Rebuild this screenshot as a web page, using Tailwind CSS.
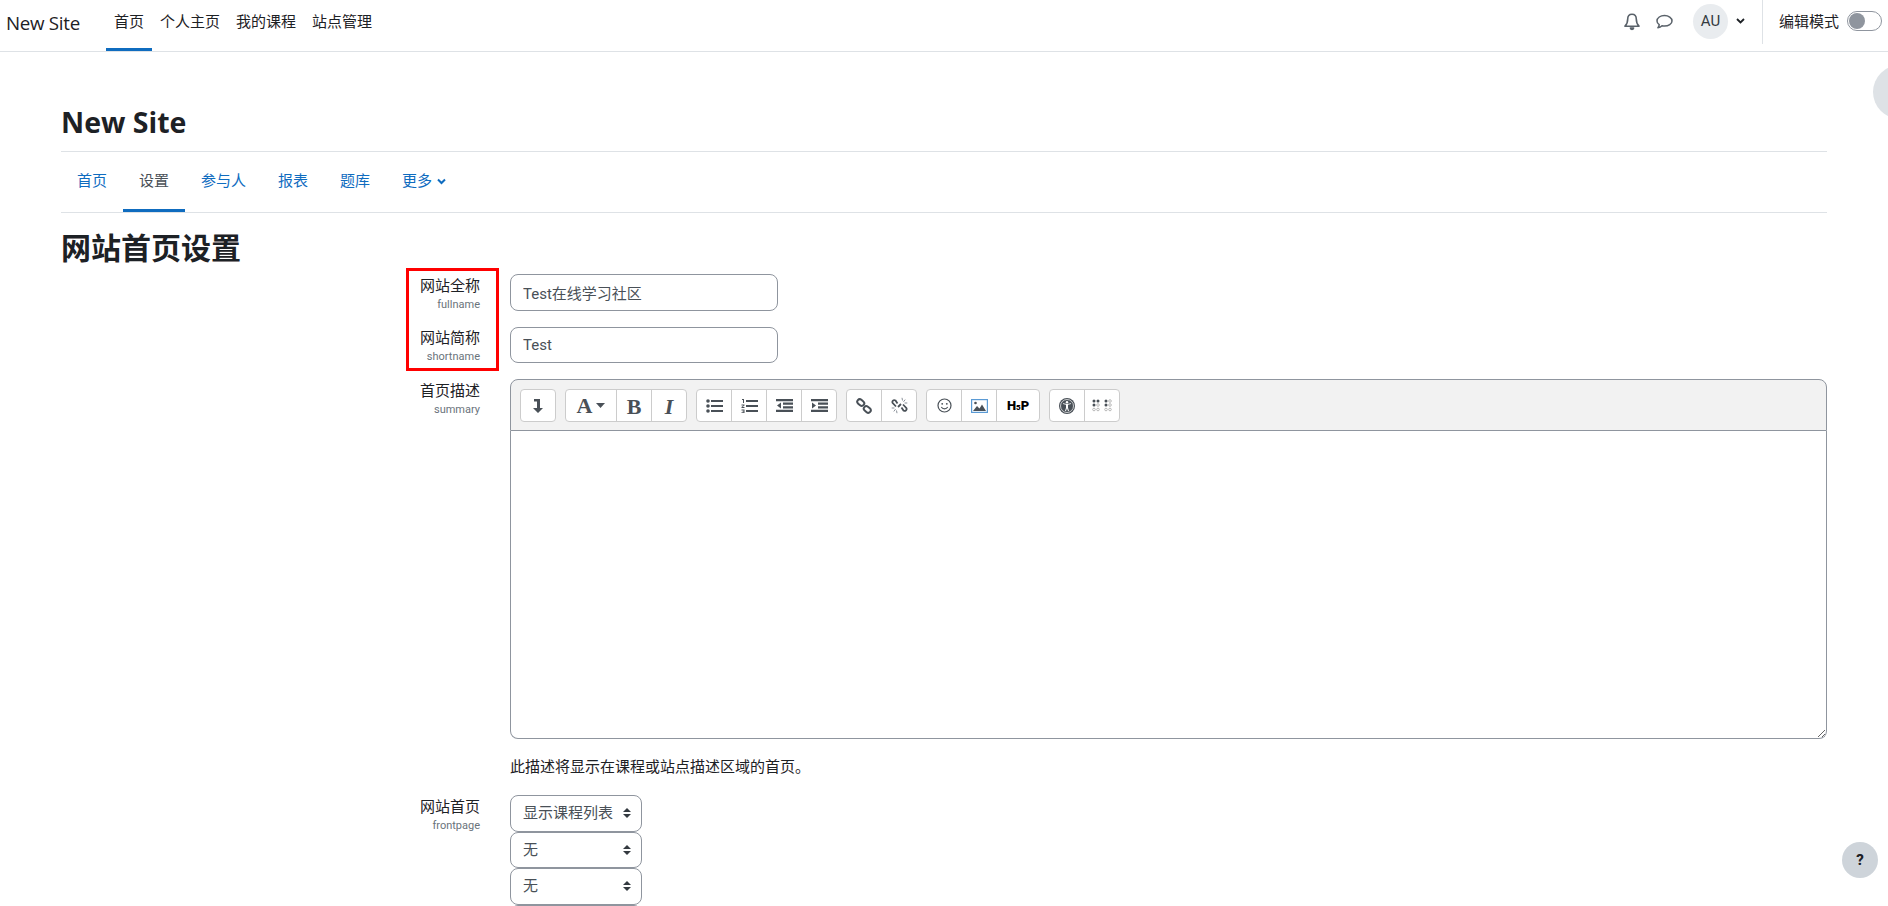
<!DOCTYPE html>
<html lang="zh-CN">
<head>
  <meta charset="UTF-8" />
  <title>网站首页设置</title>
  <script src="https://cdn.jsdelivr.net/npm/@tailwindcss/browser@4"></script>
</head>
<body class="h-screen overflow-hidden bg-white text-[15px] text-[#1d2125] font-['Roboto','Noto_Sans_CJK_SC',sans-serif]">

  <!-- top bar -->
  <header class="flex h-[52px] items-stretch border-b border-[#dee2e6] pl-[6px] pr-[6px]">
    <a href="#" class="flex w-[100px] items-center pb-1 text-[18.75px] font-['Open_Sans','Noto_Sans_CJK_SC',sans-serif] tracking-[-0.3px]">New Site</a>
    <nav class="flex">
      <a href="#" class="flex items-center border-b-[3px] border-[#0f6cbf] px-2 pb-1">首页</a>
      <a href="#" class="flex items-center border-b-[3px] border-transparent px-2 pb-1">个人主页</a>
      <a href="#" class="flex items-center border-b-[3px] border-transparent px-2 pb-1">我的课程</a>
      <a href="#" class="flex items-center border-b-[3px] border-transparent px-2 pb-1">站点管理</a>
    </nav>
    <div class="ml-auto flex items-center pb-[9px]">
      <svg class="mt-[2px] h-[18px] w-[16px]" viewBox="0 0 16 18" fill="none" stroke="#5a626a" stroke-width="1.600" stroke-linejoin="round">
        <path d="M8 1.200c-2.800 0-4.300 2.100-4.300 4.800 0 3.400-.8 5.400-2.700 7.200h14c-1.900-1.800-2.700-3.800-2.700-7.200 0-2.700-1.500-4.800-4.300-4.800z" />
        <path d="M6.400 15h3.200c0 1.800-3.200 1.800-3.200 0z" fill="#5a626a" />
      </svg>
      <svg class="ml-4 mt-[2px] h-[16px] w-[17px]" viewBox="0 0 17 16" fill="none" stroke="#5a626a" stroke-width="1.500" stroke-linejoin="round">
        <path d="M8.500 1.500C4.500 1.500 1 3.700 1 6.900c0 1.500.9 2.800 2.200 3.700-.1 1.300-.6 2.400-1.300 3.200 1.700-.2 3.100-1 4.100-2.100.8.200 1.600.3 2.500.3 4 0 7.500-2.100 7.500-5.100S12.500 1.500 8.500 1.500z" />
      </svg>
      <div class="ml-[20px] flex h-[35px] w-[35px] items-center justify-center rounded-full bg-[#e9ecef] text-[15px] text-[#343a40]">AU</div>
      <svg class="ml-[8px] h-[8px] w-[9px]" viewBox="0 0 9 8" fill="none" stroke="#1d2125" stroke-width="1.800"><path d="M1 2l3.500 3.500L8 2" /></svg>
      <div class="mb-[-9px] ml-[17px] h-[44px] w-px self-start bg-[#dee2e6]"></div>
      <span class="ml-[16px] mt-[2px]">编辑模式</span>
      <div class="ml-[8px] flex h-[20px] w-[35px] items-center rounded-full border border-[#8f959e] bg-white pl-px">
        <div class="h-[16px] w-[16px] rounded-full bg-[#8f959e]"></div>
      </div>
    </div>
  </header>

  <!-- drawer toggle, sits over the page edge -->
  <div class="absolute left-[1873px] top-[65px] h-[54px] w-[54px] rounded-full bg-[#dee2e6]"></div>

  <main class="relative">
    <div class="mx-[61px]">
      <h1 class="border-b border-[#dee2e6] pb-[12px] pt-[53px] font-['Open_Sans','Noto_Sans_CJK_SC',sans-serif] text-[28.5px] font-bold leading-[34px]">New Site</h1>

      <!-- tabs -->
      <nav class="flex h-[61px] border-b border-[#dee2e6] text-[#0f6cbf]">
        <a href="#" class="flex items-center border-b-[3px] border-transparent px-4 pt-px">首页</a>
        <a href="#" class="flex items-center border-b-[3px] border-[#0f6cbf] px-4 pt-px text-[#495057]">设置</a>
        <a href="#" class="flex items-center border-b-[3px] border-transparent px-4 pt-px">参与人</a>
        <a href="#" class="flex items-center border-b-[3px] border-transparent px-4 pt-px">报表</a>
        <a href="#" class="flex items-center border-b-[3px] border-transparent px-4 pt-px">题库</a>
        <a href="#" class="flex items-center gap-[5px] border-b-[3px] border-transparent px-4 pt-px">更多
          <svg class="h-[7px] w-[9px]" viewBox="0 0 9 7" fill="none" stroke="#0f6cbf" stroke-width="2"><path d="M1 1.500l3.500 3.500L8 1.500" /></svg>
        </a>
      </nav>

      <h2 class="mb-[7px] pt-[18px] text-[30px] font-bold leading-9">网站首页设置</h2>
    </div>

    <!-- red annotation round the first two labels -->
    <div class="absolute left-[406px] top-[216px] h-[103px] w-[93px] border-[3px] border-[#ff0000]"></div>

    <form class="ml-[61px] mr-[61px] flex flex-col">
      <div class="mb-4 flex h-[37px]">
        <label class="w-[419px] text-right leading-6">网站全称<small class="block text-[11px] leading-[14px] text-[#6a737b]">fullname</small></label>
        <input value="Test在线学习社区" class="ml-[30px] h-[37px] w-[268px] rounded-lg border border-[#8f959e] px-3 text-[#495057]" />
      </div>
      <div class="mb-4 flex h-[36px]">
        <label class="w-[419px] text-right leading-[22px]">网站简称<small class="mt-px block text-[11px] leading-[14px] text-[#6a737b]">shortname</small></label>
        <input value="Test" class="ml-[30px] h-[36px] w-[268px] rounded-lg border border-[#8f959e] px-3 text-[#495057]" />
      </div>

      <div class="flex">
        <label class="w-[419px] text-right leading-6">首页描述<small class="block text-[11px] leading-[14px] text-[#6a737b]">summary</small></label>
        <div class="ml-[30px] flex h-[360px] flex-1 flex-col">
          <!-- editor toolbar -->
          <div class="flex h-[52px] shrink-0 gap-[9px] rounded-t-lg border border-[#8f959e] bg-[#f2f2f2] pl-[9px] pt-[9px] text-[#495057]">
            <div class="flex h-[33px] rounded border border-[#ccc] bg-white">
              <button type="button" class="flex w-[34px] items-center justify-center">
                <svg class="h-[14px] w-[10px]" viewBox="0 0 10 14" fill="#495057"><path d="M1 0h6v9h3L5 14 0 9h4V2.500H1z" /></svg>
              </button>
            </div>
            <div class="flex h-[33px] rounded border border-[#ccc] bg-white">
              <button type="button" class="flex w-[50px] items-center justify-center gap-[4px] font-['Liberation_Serif',serif] text-[22px] font-bold">A
                <svg class="h-[5px] w-[9px]" viewBox="0 0 9 5" fill="#495057"><path d="M0 0h9L4.500 5z" /></svg>
              </button>
              <button type="button" class="w-[35px] border-l border-[#ccc] font-['Liberation_Serif',serif] text-[22px] font-bold">B</button>
              <button type="button" class="w-[35px] border-l border-[#ccc] font-['Liberation_Serif',serif] text-[22px] font-bold italic">I</button>
            </div>
            <div class="flex h-[33px] rounded border border-[#ccc] bg-white">
              <button type="button" class="flex w-[34px] items-center justify-center">
                <svg class="h-[14px] w-[17px]" viewBox="0 0 17 14" fill="#495057"><circle cx="2" cy="2" r="1.800" /><circle cx="2" cy="7" r="1.800" /><circle cx="2" cy="12" r="1.800" /><path d="M5 1h12v2H5zM5 6h12v2H5zM5 11h12v2H5z" /></svg>
              </button>
              <button type="button" class="flex w-[35px] items-center justify-center border-l border-[#ccc]">
                <svg class="h-[14px] w-[17px]" viewBox="0 0 17 14" fill="#495057"><path d="M1 0h2v4H2V1H1zM.5 5.500h3v1l-2 1.500h2v1h-3v-1l2-1.500h-2zM.5 10.500h3v3.500h-3v-.8h2v-.6h-1v-.6h1v-.6h-2zM5 1h12v2H5zM5 6h12v2H5zM5 11h12v2H5z" /></svg>
              </button>
              <button type="button" class="flex w-[35px] items-center justify-center border-l border-[#ccc]">
                <svg class="h-[13px] w-[17px]" viewBox="0 0 17 13" fill="#495057"><path d="M0 0h17v2.200H0zM7 3.600h10v2.200H7zM7 7.200h10v2.200H7zM0 10.800h17V13H0zM5 3.500v6L1 6.500z" /></svg>
              </button>
              <button type="button" class="flex w-[35px] items-center justify-center border-l border-[#ccc]">
                <svg class="h-[13px] w-[17px]" viewBox="0 0 17 13" fill="#495057"><path d="M0 0h17v2.200H0zM7 3.600h10v2.200H7zM7 7.200h10v2.200H7zM0 10.800h17V13H0zM1 3.500v6l4-3z" /></svg>
              </button>
            </div>
            <div class="flex h-[33px] rounded border border-[#ccc] bg-white">
              <button type="button" class="flex w-[34px] items-center justify-center">
                <svg class="h-[16px] w-[16px]" viewBox="0 0 16 16" fill="none" stroke="#495057" stroke-width="2"><rect x="1" y="2" width="7.500" height="5" rx="2.500" transform="rotate(40 4.700 4.500)" /><rect x="7.500" y="9" width="7.500" height="5" rx="2.500" transform="rotate(40 11.300 11.500)" /></svg>
              </button>
              <button type="button" class="flex w-[35px] items-center justify-center border-l border-[#ccc]">
                <svg class="h-[17px] w-[17px]" viewBox="0 0 17 17" fill="none" stroke="#495057" stroke-width="1.800"><path d="M6.500 6.500L4.500 3.500c-2-1.200-3.800.8-2.800 2.500l3.300 3.500M10.500 10.500l2 3c2 1.200 3.800-.8 2.800-2.500L12 7.500" /><path d="M7 10l3-3" /><path d="M11 .8l.5 2.700M14.200 2.600l-1.700 2.200M16.300 6h-2.700M.7 11h2.700M2.800 14.400l1.700-2.200M6 16.200l-.5-2.700" stroke="#8a9099" stroke-width="1" /></svg>
              </button>
            </div>
            <div class="flex h-[33px] rounded border border-[#ccc] bg-white">
              <button type="button" class="flex w-[34px] items-center justify-center">
                <svg class="h-[15px] w-[15px]" viewBox="0 0 15 15" fill="none" stroke="#495057" stroke-width="1.200"><circle cx="7.500" cy="7.500" r="6.500" /><circle cx="5.200" cy="5.800" r=".9" fill="#495057" stroke="none" /><circle cx="9.800" cy="5.800" r=".9" fill="#495057" stroke="none" /><path d="M4.300 9c1.500 2.500 4.900 2.500 6.400 0" /></svg>
              </button>
              <button type="button" class="flex w-[35px] items-center justify-center border-l border-[#ccc]">
                <svg class="h-[14px] w-[17px]" viewBox="0 0 17 14"><rect x=".6" y=".6" width="15.800" height="12.800" fill="#fff" stroke="#5b9bd5" stroke-width="1.200" /><path d="M2 12l4-5 2.500 2.500L11 5.500l4 6.500z" fill="#495057" /><circle cx="4.500" cy="4" r="1.300" fill="#495057" /></svg>
              </button>
              <button type="button" class="w-[43px] border-l border-[#ccc] text-[13px] font-black text-black">H<span class="text-[8px]">5</span>P</button>
            </div>
            <div class="flex h-[33px] rounded border border-[#ccc] bg-white">
              <button type="button" class="flex w-[34px] items-center justify-center">
                <svg class="h-[16px] w-[16px]" viewBox="0 0 16 16"><circle cx="8" cy="8" r="8" fill="#495057" /><circle cx="8" cy="8" r="6.500" fill="none" stroke="#fff" stroke-width=".7" /><circle cx="8" cy="4.300" r="1.200" fill="#fff" /><path d="M4 6l3 .7v3L6 13h1l1-2.800L9 13h1L9 9.700v-3L12 6v-.7L8 6 4 5.300z" fill="#fff" /></svg>
              </button>
              <button type="button" class="flex w-[35px] items-center justify-center border-l border-[#ccc]">
                <svg class="h-[13px] w-[20px]" viewBox="0 0 20 13" fill="#495057"><circle cx="2" cy="2" r="1.500" /><circle cx="6" cy="2" r="1.500" /><circle cx="14" cy="2" r="1.500" /><circle cx="2" cy="6" r="1.500" /><circle cx="14" cy="6" r="1.500" /><g fill="none" stroke="#aaa" stroke-width=".8"><circle cx="18" cy="2" r="1.300" /><circle cx="6" cy="6" r="1.300" /><circle cx="18" cy="6" r="1.300" /><circle cx="2" cy="10.500" r="1.300" /><circle cx="6" cy="10.500" r="1.300" /><circle cx="14" cy="10.500" r="1.300" /><circle cx="18" cy="10.500" r="1.300" /></g></svg>
              </button>
            </div>
          </div>
          <textarea class="block flex-1 resize-y rounded-b-lg border border-t-0 border-[#8f959e] outline-none"></textarea>
        </div>
      </div>
      <p class="ml-[449px] mt-[17px] mb-[17px] leading-[22px]">此描述将显示在课程或站点描述区域的首页。</p>

      <div class="flex">
        <label class="w-[419px] text-right leading-6">网站首页<small class="block text-[11px] leading-[14px] text-[#6a737b]">frontpage</small></label>
        <div class="ml-[30px] flex flex-col">
          <div class="relative h-[36.5px] w-[132px]">
            <select class="h-full w-full appearance-none rounded-lg border border-[#8f959e] pl-3 text-[#495057]"><option>显示课程列表</option></select>
            <svg class="pointer-events-none absolute right-[11px] top-[13px] h-[10px] w-[8px]" viewBox="0 0 8 10" fill="#343a40"><path d="M0 4l4-4 4 4zM0 6h8l-4 4z" /></svg>
          </div>
          <div class="relative h-[36.5px] w-[132px]">
            <select class="h-full w-full appearance-none rounded-lg border border-[#8f959e] pl-3 text-[#495057]"><option>无</option></select>
            <svg class="pointer-events-none absolute right-[11px] top-[13px] h-[10px] w-[8px]" viewBox="0 0 8 10" fill="#343a40"><path d="M0 4l4-4 4 4zM0 6h8l-4 4z" /></svg>
          </div>
          <div class="relative h-[36.5px] w-[132px]">
            <select class="h-full w-full appearance-none rounded-lg border border-[#8f959e] pl-3 text-[#495057]"><option>无</option></select>
            <svg class="pointer-events-none absolute right-[11px] top-[13px] h-[10px] w-[8px]" viewBox="0 0 8 10" fill="#343a40"><path d="M0 4l4-4 4 4zM0 6h8l-4 4z" /></svg>
          </div>
          <div class="relative h-[36.5px] w-[132px]">
            <select class="h-full w-full appearance-none rounded-lg border border-[#8f959e] pl-3 text-[#495057]"><option>无</option></select>
          </div>
        </div>
      </div>
    </form>
  </main>

  <!-- help button -->
  <button type="button" class="fixed bottom-[28px] right-[10px] h-9 w-9 rounded-full bg-[#ced4da] text-[15px] font-extrabold text-[#1d2125]">?</button>
</body>
</html>
